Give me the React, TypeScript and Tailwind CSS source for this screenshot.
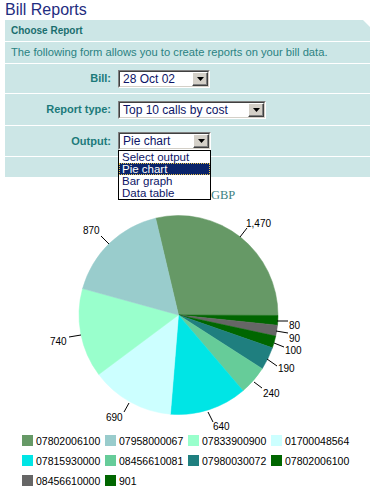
import React from "react";

const FONT = { fontFamily: "'Liberation Sans', Arial, sans-serif" };

type Slice = { value: number; color: string };

// clockwise from the 870/1,470 boundary
const slices: Slice[] = [
  { value: 1470, color: "#669966" },
  { value: 80, color: "#006600" },
  { value: 90, color: "#666666" },
  { value: 100, color: "#006600" },
  { value: 190, color: "#1f7f7f" },
  { value: 240, color: "#66cc99" },
  { value: 640, color: "#00e5e5" },
  { value: 690, color: "#ccffff" },
  { value: 740, color: "#99ffcc" },
  { value: 870, color: "#99cccc" },
];

const legend = [
  { num: "07802006100", color: "#669966" },
  { num: "07958000067", color: "#99cccc" },
  { num: "07833900900", color: "#99ffcc" },
  { num: "01700048564", color: "#ccffff" },
  { num: "07815930000", color: "#00e5e5" },
  { num: "08456610081", color: "#66cc99" },
  { num: "07980030072", color: "#1f7f7f" },
  { num: "07802006100", color: "#006600" },
  { num: "08456610000", color: "#666666" },
  { num: "901", color: "#006600" },
];

const labels = [
  { t: "1,470", x: 246, y: 227, l: [240, 237, 247, 228] },
  { t: "870", x: 83, y: 234, l: [101, 236, 109, 244] },
  { t: "740", x: 50, y: 345, l: [69, 337, 81, 335] },
  { t: "690", x: 106, y: 421, l: [124, 412, 129, 403] },
  { t: "640", x: 213, y: 430, l: [208, 412, 213, 422] },
  { t: "240", x: 263, y: 397, l: [254, 382, 262, 388] },
  { t: "190", x: 278, y: 372, l: [267, 359, 277, 366] },
  { t: "100", x: 285, y: 354, l: [274, 343, 284, 347] },
  { t: "90", x: 289, y: 342, l: [276, 331, 288, 333] },
  { t: "80", x: 289, y: 329, l: [277, 321, 288, 321] },
];

function PieChart() {
  const cx = 178.5;
  const cy = 315;
  const r = 99.5;
  const total = slices.reduce((s, x) => s + x.value, 0);
  let a = -13.3;
  const pt = (deg: number) => {
    const rad = (deg * Math.PI) / 180;
    return [cx + r * Math.sin(rad), cy - r * Math.cos(rad)];
  };
  const paths = slices.map((s) => {
    const sweep = (s.value / total) * 360;
    const [x1, y1] = pt(a);
    const [x2, y2] = pt(a + sweep);
    a += sweep;
    const large = sweep > 180 ? 1 : 0;
    return { d: `M${cx},${cy} L${x1},${y1} A${r},${r} 0 ${large} 1 ${x2},${y2} Z`, color: s.color };
  });

  return (
    <svg width={370} height={255} viewBox="0 177 370 255" className="block">
      <text x={211} y={199} fill="#3d8282" fontSize={12.5} fontFamily="'Liberation Serif', serif">
        GBP
      </text>
      {paths.map((p, i) => (
        <path key={i} d={p.d} fill={p.color} stroke={p.color} strokeWidth={0.5} />
      ))}
      {labels.map((lb) => (
        <g key={lb.t}>
          <line x1={lb.l[0]} y1={lb.l[1]} x2={lb.l[2]} y2={lb.l[3]} stroke="#000" strokeWidth={1} />
          <text x={lb.x} y={lb.y} fontSize={10} fill="#000" fontFamily="'Liberation Sans', Arial, sans-serif">
            {lb.t}
          </text>
        </g>
      ))}
    </svg>
  );
}

function Select({ value, width, open }: { value: string; width: number; open?: boolean }) {
  return (
    <div className="relative" style={{ width }}>
      <div className="flex h-[18px] border border-t-[#808080] border-l-[#808080] border-b-white border-r-white">
        <div className="flex flex-1 items-center border border-t-[#404040] border-l-[#404040] border-b-[#d4d0c8] border-r-[#d4d0c8] bg-white">
          <span className="flex-1 pl-[3px] text-[12px] leading-none text-[#0c1466]">{value}</span>
          <div className="flex h-full w-[16px] items-center justify-center border border-t-white border-l-white border-b-[#404040] border-r-[#404040] bg-[#d4d0c8] shadow-[inset_-1px_-1px_0_#808080]">
            <svg width="7" height="4" viewBox="0 0 7 4">
              <path d="M0 0H7L3.5 4Z" fill="#000" />
            </svg>
          </div>
        </div>
      </div>
      {open && (
        <div className="absolute left-0 top-full z-10 w-[93px] border border-black bg-white text-[11.5px] leading-[12px] text-[#0c1466]">
          <div className="h-[12px] pl-[3px]">Select output</div>
          <div className="h-[12px] border border-dotted border-[#e6c04a] bg-[#0a246a] pl-[2px] leading-[10px] text-white">
            Pie chart
          </div>
          <div className="h-[12px] pl-[3px]">Bar graph</div>
          <div className="h-[12px] pl-[3px]">Data table</div>
        </div>
      )}
    </div>
  );
}

function FormRow({ label, h, children }: { label: string; h: string; children: React.ReactNode }) {
  return (
    <div className={`flex items-center border-b border-white ${h}`}>
      <div className="w-[106px] text-right text-[11px] font-bold text-[#1b7a7a]">{label}</div>
      <div className="ml-[7px]">{children}</div>
    </div>
  );
}

export default function App() {
  return (
    <div className="h-[488px] w-[370px] overflow-hidden bg-white" style={FONT}>
      <h1 className="h-[20px] pl-[5px] text-[16px] leading-[20px] text-[#1f2d80]">Bill Reports</h1>
      <div className="relative z-10 ml-[5px] bg-[#cce6e6]">
        {/* cut corner */}
        <div className="absolute right-0 top-0 h-[7px] w-[7px] bg-white [clip-path:polygon(0_0,100%_0,100%_100%)]" />
        <div className="flex h-[22px] items-center border-b border-white pl-[6px] text-[10px] font-bold text-[#1a6e6e]">
          Choose Report
        </div>
        <div className="flex h-[22px] items-center border-b border-white pl-[6px] text-[11.2px] text-[#2a8282]">
          The following form allows you to create reports on your bill data.
        </div>
        <FormRow label="Bill:" h="h-[30px]">
          <Select value="28 Oct 02" width={92} />
        </FormRow>
        <FormRow label="Report type:" h="h-[32px]">
          <Select value="Top 10 calls by cost" width={148} />
        </FormRow>
        <FormRow label="Output:" h="h-[31px]">
          <Select value="Pie chart" width={93} open />
        </FormRow>
        <div className="h-[20px]" />
      </div>
      <PieChart />
      <div className="flex flex-col pl-[22px] pt-[3px] text-[10.5px] text-black">
        {[0, 4, 8].map((start) => (
          <div key={start} className="flex h-[20px]">
            {legend.slice(start, start + 4).map((it, i) => (
              <div key={i} className="flex w-[83px] items-start gap-[3px]">
                <span className="h-[11px] w-[11px] shrink-0" style={{ backgroundColor: it.color }} />
                <span className="leading-[13px]">{it.num}</span>
              </div>
            ))}
          </div>
        ))}
      </div>
    </div>
  );
}
